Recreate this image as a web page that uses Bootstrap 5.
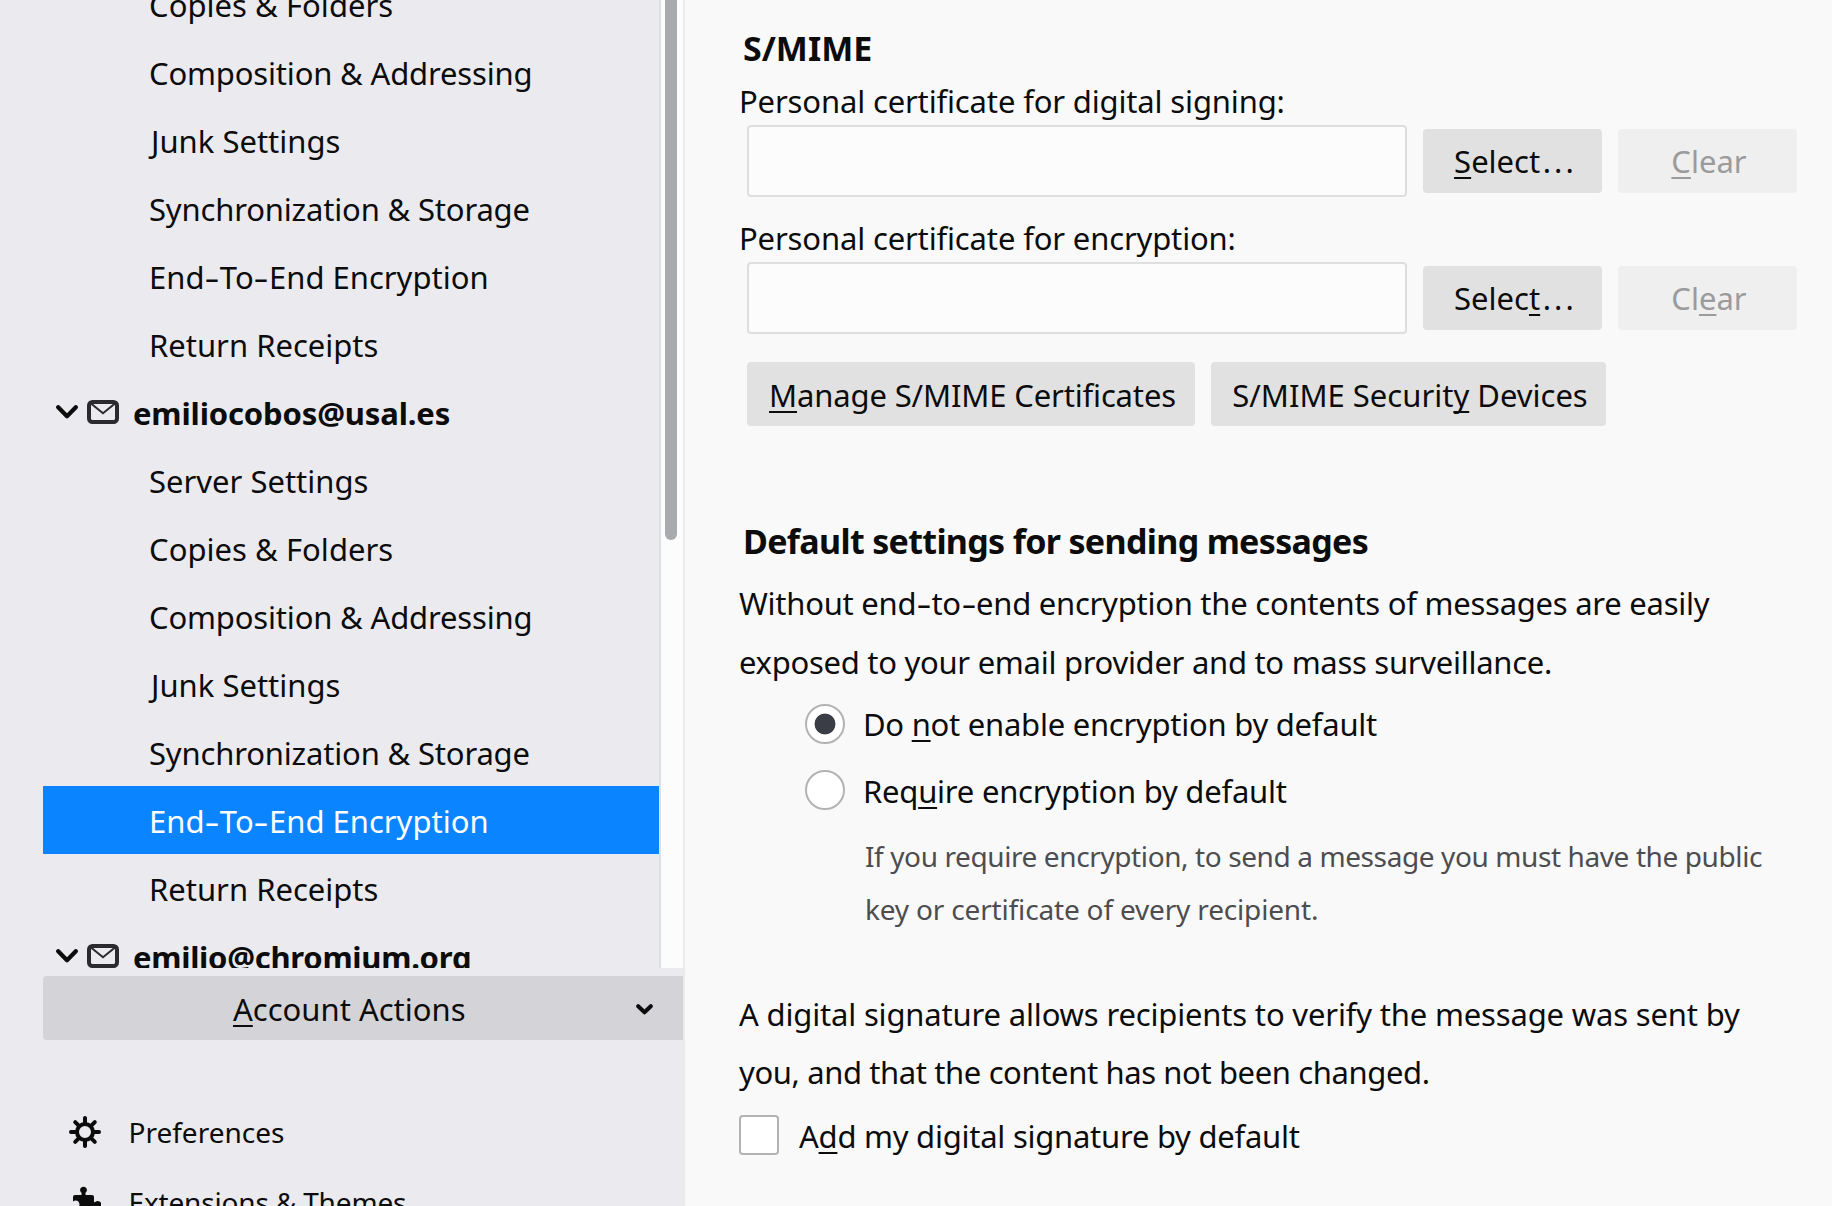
<!DOCTYPE html>
<html lang="en">
<head>
<meta charset="utf-8">
<title>Account Settings</title>
<link href="https://cdn.jsdelivr.net/npm/bootstrap@5.3.0/dist/css/bootstrap.min.css" rel="stylesheet">
<style>
body { font-family: "Noto Sans", sans-serif; font-size: 31px; line-height: 44px; color: #0c0c0d; background: #f9f9fa; }
.app-shell { height: 1206px; }
.side-pane { width: 685px; background: #eaeaef; border-right: 2px solid #ebebed; padding-left: 43px; }
.tree-area { height: 968px; }
.tree-list { width: 616px; margin-top: -30px; }
.tree-list .list-group-item { height: 68px; padding: 0 0 0 106px; line-height: 70px; border: 0; border-radius: 0; background: transparent; color: inherit; white-space: nowrap; }
.tree-list .list-group-item.active { background: #0a84ff; color: #fff; margin-top: 0; }
.tree-list .junk-row { padding-left: 108px; }
.tree-list .account-row { padding: 1px 0 0 13px; }
.twisty { width: 22px; height: 14px; margin: -1px 9px 0 0; }
.envelope { width: 32px; height: 24px; margin: -1px 14px 0 0; }
.scroll-track { width: 24px; background: #fcfcfc; border-left: 2px solid #dce1e3; padding-left: 4px; }
.scroll-thumb { width: 12px; height: 540px; background: #a9aaae; border-radius: 0 0 6px 6px; }
.btn-flat { --bs-btn-color: #0c0c0d; --bs-btn-bg: #e1e1e1; --bs-btn-border-width: 0; --bs-btn-border-radius: 4px; --bs-btn-padding-y: 0; height: 64px; font-size: 31px; line-height: 65px; white-space: nowrap; }
.btn-cert { width: 179px; --bs-btn-padding-x: 0; padding-left: 3px; }
.btn-clear { color: #9b9b9c !important; background: #efefef !important; opacity: 1 !important; }
.btn-account { background: #d4d4d8 !important; margin-top: 8px; width: 640px; border-radius: 4px 0 0 4px; padding: 2px 30px 0 190px; }
.btn-account svg { width: 17px; height: 11px; }
.side-links { font-size: 28px; padding: 57px 0 0 26px; }
.side-links .nav-link { height: 70px; padding: 0; color: inherit; line-height: 50px; }
.side-links svg { width: 32px; height: 32px; margin-right: 27.5px; }
.main-pane { width: 1147px; padding-left: 54px; white-space: nowrap; }
.sect-title { font-size: 34px; font-weight: 700; line-height: 44px; }
.smime-title { padding-top: 26px; margin: 0 0 9px 4px; }
.default-title { margin: 93px 0 0 4px; }
.field-label { height: 46px; line-height: 44px; }
.second-label { height: 47px; margin-top: 18px; line-height: 47px; }
.cert-field { width: 660px; height: 72px; border: 2px solid #dedede; border-radius: 4px; background: #fcfcfc; }
.cert-row { padding-left: 8px; gap: 16px; }
.manage-row { margin-top: 28px; }
.manage-row .btn { line-height: 66px; padding: 0 0 0 3px; }
.manage-btn { width: 448px; }
.device-btn { width: 395px; }
.choice { height: 66px; gap: 18px; }
.choice .form-check-input { width: 40px; height: 40px; margin: 0; border: 2px solid #b3b3b4; background-color: #fff; }
.choice .form-check-input:checked[type=radio] { background-image: radial-gradient(circle, #3b3d46 0, #3b3d46 10px, transparent 10.8px); background-size: auto; background-position: center; }
.choice .form-check-input[type=checkbox] { border-radius: 4px; }
.para { line-height: 58.5px; margin-top: 11px; }
.radio-group { padding-left: 66px; }
.drop-text { padding-top: 2px; }
.hint-text { font-size: 28px; line-height: 53px; color: #4d4d50; padding-left: 60px; margin-top: 7px; }
.sign-para { margin-top: 49px; line-height: 58px; }
.sign-choice { margin-top: 1px; gap: 20px; }
u { text-decoration-thickness: 2px; text-underline-offset: 4px; text-decoration-skip-ink: none; }
.wide-dots { letter-spacing: 3.1px; margin: 0 -3px 0 2.5px; }
.wide-hyphen { display: inline-block; transform: scaleX(1.5); margin: 0 2.7px; }
.ls-a { letter-spacing: -.1px; } .ls-b { letter-spacing: .04px; } .ls-l { letter-spacing: -.17px; }
.ls-d { letter-spacing: -.15px; } .ls-e { letter-spacing: -.23px; } .ls-f { letter-spacing: -.17px; }
.ls-g { letter-spacing: -.67px; } .ls-h { letter-spacing: -.28px; } .ls-i { letter-spacing: -.255px; }
.ls-j { letter-spacing: -.397px; } .ls-k { letter-spacing: -.39px; } .ls-m { letter-spacing: -.25px; }
</style>
<script src="https://cdn.jsdelivr.net/npm/bootstrap@5.3.0/dist/js/bootstrap.bundle.min.js"></script>
</head>
<body>
<svg class="d-none" xmlns="http://www.w3.org/2000/svg">
  <symbol id="chev" viewBox="0 0 22 14"><path d="M2.2 2.2 11 11.3l8.800-9.100" fill="none" stroke="#0c0c0d" stroke-width="4.200" stroke-linecap="round" stroke-linejoin="round"/></symbol>
  <symbol id="mail" viewBox="0 0 32 24"><rect x="2" y="2" width="28" height="20" rx="3.500" fill="none" stroke="#2b2b2e" stroke-width="4"/><path d="M4 3.500 16 13.300 28 3.500" fill="none" stroke="#2b2b2e" stroke-width="2"/></symbol>
</svg>
<div class="app-shell d-flex overflow-hidden">
  <aside class="side-pane flex-shrink-0 overflow-hidden">
    <div class="tree-area d-flex overflow-hidden">
      <div class="tree-list list-group flex-shrink-0">
        <div class="list-group-item ls-b">Copies &amp; Folders</div>
        <div class="list-group-item ls-l">Composition &amp; Addressing</div>
        <div class="list-group-item junk-row">Junk Settings</div>
        <div class="list-group-item ls-f">Synchronization &amp; Storage</div>
        <div class="list-group-item">End<span class="wide-hyphen">-</span>To<span class="wide-hyphen">-</span>End Encryption</div>
        <div class="list-group-item">Return Receipts</div>
        <div class="list-group-item account-row d-flex align-items-center fw-bold ls-d"><svg class="twisty"><use href="#chev"/></svg><svg class="envelope"><use href="#mail"/></svg>emiliocobos@usal.es</div>
        <div class="list-group-item">Server Settings</div>
        <div class="list-group-item ls-b">Copies &amp; Folders</div>
        <div class="list-group-item ls-l">Composition &amp; Addressing</div>
        <div class="list-group-item junk-row">Junk Settings</div>
        <div class="list-group-item ls-f">Synchronization &amp; Storage</div>
        <div class="list-group-item active">End<span class="wide-hyphen">-</span>To<span class="wide-hyphen">-</span>End Encryption</div>
        <div class="list-group-item">Return Receipts</div>
        <div class="list-group-item account-row d-flex align-items-center fw-bold ls-h"><svg class="twisty"><use href="#chev"/></svg><svg class="envelope"><use href="#mail"/></svg>emilio@chromium.org</div>
      </div>
      <div class="scroll-track flex-shrink-0"><div class="scroll-thumb"></div></div>
    </div>
    <button class="btn btn-flat btn-account d-flex align-items-center justify-content-between"><span><u>A</u>ccount Actions</span><svg viewBox="0 0 17 11"><path d="M2.200 2.200 8.500 8.300l6.300-6.100" fill="none" stroke="#0c0c0d" stroke-width="4" stroke-linecap="round" stroke-linejoin="round"/></svg></button>
    <nav class="side-links nav flex-column flex-nowrap">
      <a class="nav-link d-flex align-items-center"><svg viewBox="0 0 32 32" fill="none" stroke="#0c0c0d" stroke-linecap="round"><circle cx="16" cy="16" r="8" stroke-width="4"/><path d="M16 2v5M16 25v5M2 16h5M25 16h5M6.200 6.200l3.500 3.500M22.300 22.300l3.500 3.500M6.200 25.800l3.500-3.500M22.300 9.700l3.500-3.500" stroke-width="4"/></svg>Preferences</a>
      <a class="nav-link d-flex align-items-center ls-f"><svg viewBox="0 0 32 32" fill="#0c0c0d"><path d="M12.500 9V6.800a3.400 3.400 0 1 1 4 0V9H23a2 2 0 0 1 2 2v5.300c1.300.2 1.800-1.300 3.500-1.300a3.500 3.500 0 0 1 0 8c-1.700 0-2.200-1.300-3.500-1V28a2 2 0 0 1-2 2H4v-8c2.500 1.500 6.500.2 6.500-3.500S6.500 13.500 4 15.500V11a2 2 0 0 1 2-2z"/></svg>Extensions &amp; Themes</a>
    </nav>
  </aside>
  <main class="main-pane flex-shrink-0">
    <h2 class="sect-title smime-title">S/MIME</h2>
    <div class="field-label ls-d">Personal certificate for digital signing:</div>
    <div class="cert-row d-flex align-items-center">
      <div class="cert-field"></div>
      <button class="btn btn-flat btn-cert"><u>S</u>elect<span class="wide-dots">...</span></button>
      <button class="btn btn-flat btn-cert btn-clear" disabled><u>C</u>lear</button>
    </div>
    <div class="field-label second-label ls-d">Personal certificate for encryption:</div>
    <div class="cert-row d-flex align-items-center">
      <div class="cert-field"></div>
      <button class="btn btn-flat btn-cert">Selec<u>t</u><span class="wide-dots">...</span></button>
      <button class="btn btn-flat btn-cert btn-clear" disabled>Cl<u>e</u>ar</button>
    </div>
    <div class="cert-row manage-row d-flex">
      <button class="btn btn-flat manage-btn ls-d"><u>M</u>anage S/MIME Certificates</button>
      <button class="btn btn-flat device-btn">S/MIME Securit<u>y</u> Devices</button>
    </div>
    <h2 class="sect-title default-title ls-g">Default settings for sending messages</h2>
    <div class="para"><div class="ls-m">Without end<span class="wide-hyphen">-</span>to<span class="wide-hyphen">-</span>end encryption the contents of messages are easily</div><div class="ls-h">exposed to your email provider and to mass surveillance.</div></div>
    <div class="radio-group">
      <label class="choice d-flex align-items-center"><input class="form-check-input" type="radio" name="enc" checked><span class="ls-i">Do <u>n</u>ot enable encryption by default</span></label>
      <label class="choice d-flex align-items-center"><input class="form-check-input" type="radio" name="enc"><span class="drop-text ls-e">Req<u>u</u>ire encryption by default</span></label>
      <div class="hint-text"><div class="ls-j">If you require encryption, to send a message you must have the public</div><div class="ls-f">key or certificate of every recipient.</div></div>
    </div>
    <div class="para sign-para"><div class="ls-f">A digital signature allows recipients to verify the message was sent by</div><div class="ls-k">you, and that the content has not been changed.</div></div>
    <label class="choice d-flex align-items-center sign-choice"><input class="form-check-input" type="checkbox"><span class="drop-text ls-m">A<u>d</u>d my digital signature by default</span></label>
  </main>
</div>
</body>
</html>
